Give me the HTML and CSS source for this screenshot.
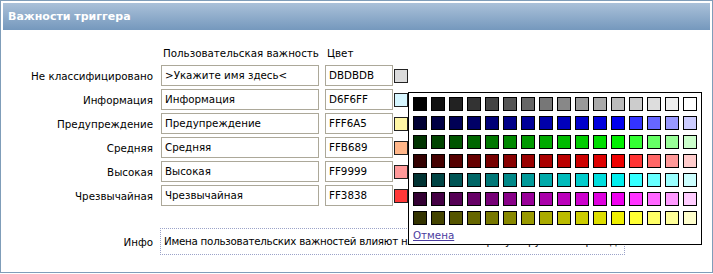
FILE: index.html
```html
<!DOCTYPE html>
<html lang="ru">
<head>
<meta charset="utf-8">
<title>Важности триггера</title>
<link rel="stylesheet" href="styles.css">
</head>
<body>
<div class="frame">
  <div class="header">Важности триггера</div>
  <div class="form">
    <div class="row head">
      <div class="lbl"></div>
      <div class="col-name">Пользовательская важность</div>
      <div class="col-color">Цвет</div>
    </div>
    <div class="row">
      <div class="lbl">Не классифицировано</div>
      <div class="name">&gt;Укажите имя здесь&lt;</div>
      <div class="hex">DBDBDB</div>
      <div class="sw" style="background:#DBDBDB"></div>
    </div>
    <div class="row">
      <div class="lbl">Информация</div>
      <div class="name">Информация</div>
      <div class="hex">D6F6FF</div>
      <div class="sw" style="background:#D6F6FF"></div>
    </div>
    <div class="row">
      <div class="lbl">Предупреждение</div>
      <div class="name">Предупреждение</div>
      <div class="hex">FFF6A5</div>
      <div class="sw" style="background:#FFF6A5"></div>
    </div>
    <div class="row">
      <div class="lbl">Средняя</div>
      <div class="name">Средняя</div>
      <div class="hex">FFB689</div>
      <div class="sw" style="background:#FFB689"></div>
    </div>
    <div class="row">
      <div class="lbl">Высокая</div>
      <div class="name">Высокая</div>
      <div class="hex">FF9999</div>
      <div class="sw" style="background:#FF9999"></div>
    </div>
    <div class="row">
      <div class="lbl">Чрезвычайная</div>
      <div class="name">Чрезвычайная</div>
      <div class="hex">FF3838</div>
      <div class="sw" style="background:#FF3838"></div>
    </div>
    <div class="row info">
      <div class="lbl">Инфо</div>
      <div class="note">Имена пользовательских важностей влияют на все языки и требуют ручного перевода!</div>
    </div>
  </div>
  <div class="picker">
    <div class="swatches"></div>
    <a class="cancel" href="#">Отмена</a>
  </div>
</div>
<script src="script.js"></script>
</body>
</html>
```
FILE: styles.css
```css
* { box-sizing: border-box; }
html, body { margin: 0; padding: 0; background: #fff; }
body {
  font-family: "DejaVu Sans", Verdana, sans-serif;
  font-size: 10.3px;
  color: #000;
}
.frame {
  position: relative;
  width: 713px;
  height: 273px;
  border: 1px solid #7f9db9;
}
.header {
  margin: 2px;
  height: 27px;
  background: linear-gradient(#aac1d9, #7598bd);
  color: #fff;
  font-weight: bold;
  font-size: 11px;
  line-height: 27px;
  padding-left: 5px;
}
.form {
  margin-top: 15px;
}
.row {
  display: flex;
  align-items: center;
  height: 21px;
  margin-bottom: 3px;
}
.row.head {
  height: 16px;
  margin-bottom: 4px;
}
.lbl {
  width: 152px;
  text-align: right;
  white-space: nowrap;
}
.col-name { margin-left: 10px; width: 164px; white-space: nowrap; }
.col-color { margin-left: 0; }
.name, .hex {
  height: 21px;
  border: 1px solid #aca899;
  padding: 0 3px;
  line-height: 19px;
  white-space: nowrap;
  overflow: hidden;
}
.name { margin-left: 8px; width: 158px; }
.hex { margin-left: 6px; width: 68px; }
.sw {
  margin-left: 1px;
  width: 14px;
  height: 14px;
  border: 1px solid #222;
}
.row.info {
  margin-top: 22px;
  height: 27px;
}
.note {
  margin-left: 7px;
  width: 465px;
  height: 27px;
  border: 1px dotted #9ba3c9;
  padding-left: 3px;
  line-height: 25px;
  letter-spacing: -0.25px;
  white-space: nowrap;
}
.picker {
  position: absolute;
  left: 407px;
  top: 91px;
  width: 294px;
  height: 153px;
  border: 1px solid #000;
  background: #fff;
  padding: 4px;
}
.swatches {
  display: grid;
  grid-template-columns: repeat(16, 14px);
  grid-auto-rows: 14px;
  column-gap: 4px;
  row-gap: 5px;
}
.swatch {
  display: block;
  border: 1px solid #000;
}
.cancel {
  display: block;
  margin-top: 3px;
  line-height: 14px;
  color: #4b3ca0;
  text-decoration: underline;
}
```
FILE: script.js
```js
(function () {
  var bases = [[1,1,1],[0,0,1],[0,1,0],[1,0,0],[0,1,1],[1,0,1],[1,1,0]];
  var grid = document.querySelector('.swatches');
  bases.forEach(function (b, r) {
    for (var i = 0; i < 16; i++) {
      var c;
      if (r === 0) {
        var g = i * 17;
        c = [g, g, g];
      } else if (i < 12) {
        var v = 0x33 + i * 0x11;
        c = b.map(function (x) { return x * v; });
      } else {
        var w = (i - 11) * 51;
        c = b.map(function (x) { return x ? 255 : w; });
      }
      var s = document.createElement('span');
      s.className = 'swatch';
      s.style.background = 'rgb(' + c.join(',') + ')';
      grid.appendChild(s);
    }
  });
})();
```
